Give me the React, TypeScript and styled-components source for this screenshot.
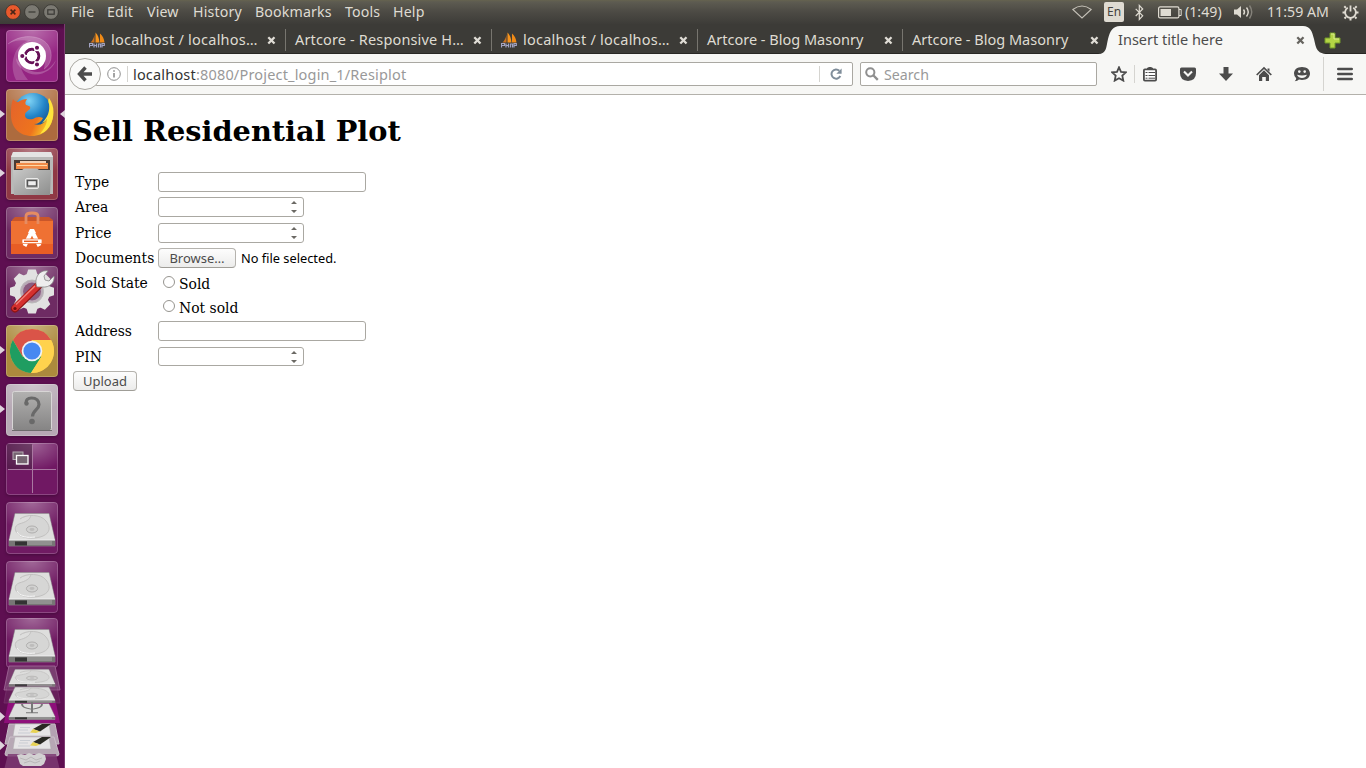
import React from "react";
import styled, { createGlobalStyle } from "styled-components";

const UI = `"Noto Sans", "Open Sans", sans-serif`;
const SERIF = `"DejaVu Serif", serif`;

const Global = createGlobalStyle`
  *, *::before, *::after { box-sizing: border-box; }
  body { margin: 0; background: #fff; overflow: hidden; }
  svg { display: block; flex: none; }
`;

const Desktop = styled.div`
  width: 1366px;
  height: 768px;
  display: flex;
  flex-direction: column;
  overflow: hidden;
  font-family: ${UI};
`;

/* ---------- top panel ---------- */
const Panel = styled.header`
  height: 24px;
  flex: none;
  display: flex;
  align-items: center;
  padding: 0 7px 0 5px;
  background: linear-gradient(#66634f 0, #5d5b51 2px, #4c4a44 12px, #3d3c38 24px);
  color: #dfdbd2;
`;
const WindowButtons = styled.div`
  display: flex;
  gap: 3px;
  margin-right: 12px;
`;
const Text = styled.span<{ $w?: number; $ls?: number; $size?: number; $gap?: number; $drop?: number }>`
  display: block;
  flex: none;
  white-space: nowrap;
  width: ${(p) => (p.$w ? `${p.$w}px` : "auto")};
  margin-right: ${(p) => p.$gap ?? 0}px;
  padding-top: ${(p) => p.$drop ?? 0}px;
  font-size: ${(p) => p.$size ?? 14}px;
  letter-spacing: ${(p) => p.$ls ?? 0}px;
  line-height: 20px;
`;
const TabText = styled(Text)`
  padding-bottom: 2px;
`;
const Indicators = styled.div`
  display: flex;
  align-items: center;
  margin-left: auto;
  height: 24px;
`;
const Lang = styled.span`
  width: 20px;
  height: 20px;
  margin: 0 11px 0 12px;
  border-radius: 2px;
  background: #dfdbd2;
  color: #45433e;
  font-size: 12px;
  line-height: 20px;
  text-align: center;
`;

/* ---------- launcher ---------- */
const Body = styled.div`
  display: flex;
  flex: 1;
  min-height: 0;
`;
const Launcher = styled.nav`
  width: 65px;
  flex: none;
  display: flex;
  flex-direction: column;
  gap: 7px;
  padding: 6px 0 0 6px;
  background: linear-gradient(90deg, transparent 64px, #7c3a71 64px),
    linear-gradient(#3b0a33 0, #5e0f51 6px, #5e0f51 100%);
`;
const Tile = styled.div<{ $bg: string; $short?: boolean }>`
  position: relative;
  width: 52px;
  height: ${(p) => (p.$short ? 50 : 52)}px;
  margin-top: ${(p) => (p.$short ? -2 : 0)}px;
  flex: none;
  border-radius: 4px;
  background: ${(p) => p.$bg};
  box-shadow: inset 0 0 0 1px rgba(255, 255, 255, 0.2), 0 1px 3px rgba(0, 0, 0, 0.25);
`;
const Pip = styled.i<{ $right?: boolean }>`
  position: absolute;
  top: 21px;
  ${(p) => (p.$right ? "right: -7px" : "left: -6px")};
  border: 5px solid transparent;
  border-width: 4.5px 5px;
  ${(p) => (p.$right ? "border-right-color: #ded3dc; border-left-width: 0" : "border-left-color: #ded3dc; border-right-width: 0")};
`;
const StackArea = styled.div`
  position: relative;
  margin: -13px 0 0 -6px;
`;

/* ---------- browser ---------- */
const Browser = styled.main`
  flex: 1;
  min-width: 0;
  display: flex;
  flex-direction: column;
  background: #fff;
`;
const TabStrip = styled.div`
  height: 30px;
  flex: none;
  display: flex;
  padding-left: 14px;
  background: #3c3b37;
  border-bottom: 1px solid #282724;
`;
const Tab = styled.div<{ $w: number; $last?: boolean }>`
  width: ${(p) => p.$w}px;
  flex: none;
  display: flex;
  align-items: center;
  padding: 3px 10px 0 9px;
  color: #dfdbd2;
  background: ${(p) =>
    p.$last ? "none" : "linear-gradient(#77756f, #77756f) right 5px / 1px 22px no-repeat"};
  &:first-child { padding-left: 10px; }
`;
const CloseSlot = styled.span`
  margin-left: auto;
`;
const ActiveTab = styled.div`
  position: relative;
  width: 230px;
  height: 30px;
  margin-left: -11px;
  flex: none;
  display: flex;
  align-items: center;
  padding: 3px 23px 1px 20px;
  color: #4c4c4c;
`;
const TabShape = styled.svg`
  position: absolute;
  left: 0;
  top: 0;
`;
const ActiveContent = styled.div`
  position: relative;
  flex: 1;
  display: flex;
  align-items: center;
`;
const NewTab = styled.div`
  padding-top: 8px;
  margin-left: -4px;
`;
const Toolbar = styled.div`
  height: 41px;
  flex: none;
  display: flex;
  align-items: center;
  padding: 0 13px 0 4px;
  background: #f7f7f5;
  border-bottom: 1px solid #b3b1ab;
`;
const Back = styled.div`
  position: relative;
  z-index: 1;
  width: 32px;
  height: 32px;
  flex: none;
  display: grid;
  place-items: center;
  border: 1px solid #aaa8a2;
  border-radius: 50%;
  background: #fafaf9;
`;
const Field = styled.div<{ $w: number; $url?: boolean }>`
  width: ${(p) => p.$w}px;
  height: 24px;
  flex: none;
  display: flex;
  align-items: center;
  margin-left: ${(p) => (p.$url ? -6 : 7)}px;
  padding: ${(p) => (p.$url ? "0 10px 0 11px" : "0 4px")};
  background: #fff;
  border: 1px solid #aaa8a2;
  border-radius: 2px;
  color: #999;
  b { font-weight: 400; color: #333; }
`;
const Divider = styled.i<{ $h: number; $m: string }>`
  width: 1px;
  height: ${(p) => p.$h}px;
  margin: ${(p) => p.$m};
  background: #d5d4d0;
  flex: none;
`;
const Tools = styled.div`
  display: flex;
  align-items: center;
  margin-left: auto;
`;
const ToolIcons = styled.div`
  display: flex;
  gap: 22px;
`;

/* ---------- page ---------- */
const Page = styled.section`
  padding: 18px 0 0 8px;
  font-family: ${SERIF};
  color: #000;
`;
const Title = styled.h1`
  margin: 0 0 21px -1px;
  height: 36px;
  font-size: 28.8px;
  line-height: 36px;
  font-weight: 700;
  white-space: nowrap;
`;
const Row = styled.div<{ $h: number }>`
  height: ${(p) => p.$h}px;
  display: flex;
  align-items: center;
  padding-left: 2px;
`;
const Label = styled.label`
  width: 83px;
  flex: none;
  font-size: 13.9px;
  line-height: 20px;
  white-space: nowrap;
`;
const Box = styled.div<{ $w: number; $h?: number }>`
  width: ${(p) => p.$w}px;
  height: ${(p) => p.$h ?? 20}px;
  display: flex;
  align-items: center;
  border: 1px solid #aaa8a2;
  border-radius: 3px;
  background: #fff;
  padding-right: 5px;
`;
const Input = styled.input`
  flex: 1;
  min-width: 0;
  height: 16px;
  padding: 0 4px;
  border: 0;
  outline: 0;
  background: none;
  font: 13px ${UI};
`;
const Button = styled.button<{ $w: number }>`
  display: block;
  width: ${(p) => p.$w}px;
  height: 20px;
  padding: 0;
  border: 1px solid #b5b3ae;
  border-bottom-color: #9f9d97;
  border-radius: 4px;
  background: linear-gradient(#fdfdfd, #ececeb);
  color: #4c4c4c;
  font: 13px/17px ${UI};
`;
const SubmitButton = styled(Button)`
  margin-top: 2px;
`;
const FileNote = styled.span`
  margin-left: 5px;
  font: 12.8px/18px ${UI};
`;
const Radio = styled.input.attrs({ type: "radio" })`
  appearance: none;
  width: 12px;
  height: 12px;
  margin: -2px 4px 0 5px;
  border: 1px solid #96948f;
  border-radius: 50%;
  background: #fff;
`;
const RadioText = styled.label`
  font-size: 13.9px;
  line-height: 20px;
  padding-top: 2px;
`;

/* ---------- small icons ---------- */
const WinBtn = ({ kind }: { kind: "close" | "min" | "max" }) => (
  <svg width="16" height="16" viewBox="0 0 16 16">
    <circle cx="8" cy="8" r="7.4" fill={kind === "close" ? "#e9592c" : "#7b7972"} stroke="#35332f" strokeWidth=".8" />
    {kind === "close" && <path d="M5.6 5.6l4.8 4.8M10.4 5.6l-4.8 4.8" stroke="#4b2517" strokeWidth="1.5" />}
    {kind === "min" && <path d="M4.5 8h7" stroke="#3a3935" strokeWidth="1.2" />}
    {kind === "max" && <rect x="4.8" y="5.8" width="6.4" height="4.4" fill="none" stroke="#3a3935" strokeWidth="1.2" />}
  </svg>
);
const Close = ({ color = "#e0ddd6" }: { color?: string }) => (
  <svg width="9" height="9" viewBox="0 0 9 9">
    <path d="M1.3 1.3l6.2 6.2M7.5 1.3L1.3 7.5" stroke={color} strokeWidth="2.3" />
  </svg>
);
const Favicon = () => (
  <svg width="16" height="16" viewBox="0 0 16 16">
    <path d="M5.500 2.500C5 6 3.500 8.500 1.500 10.500h4z" fill="#c9711d" />
    <path d="M6.500 .5v10h4C10 6 9 3 6.500 .5z" fill="#f7941d" />
    <path d="M11 1.500v9h4.500c-.5-4-2-7-4.500-9z" fill="#f08a16" />
    <path d="M.5 11v4.500M.5 11.500h3v2h-3M5 15.500V11.500M5 13.500h2.500M7.500 11.500v4M9.500 15.500V12h2v3.500M13 15.500v-4h2.300v2H13" fill="none" stroke="#a3a4c2" strokeWidth="1.200" />
  </svg>
);

/* ---------- launcher art ---------- */
const Art = ({ children }: { children: React.ReactNode }) => (
  <svg width="52" height="52" viewBox="0 0 52 52">{children}</svg>
);
const UbuntuLogo = () => (
  <Art>
    <path d="M2 14C14 4 34 4 42 15c6 9 3 20-4 24 3-14-2-24-12-27C17 9 9 10 2 14z" fill="#fff" opacity=".2" />
    <path d="M10 50C2 33 9 13 25 10c-9 6-13 15-11 24 1 6 4 11 8 16z" fill="#fff" opacity=".18" />
    <path d="M50 30c-4 13-22 20-34 9-4-3-6-7-6-11 7 12 18 16 28 13 5-2 9-6 12-11z" fill="#fff" opacity=".22" />
    <path d="M2 14C14 4 34 4 42 15c6 9 3 20-4 24" fill="none" stroke="#f3d9ef" strokeWidth=".8" opacity=".3" />
    <circle cx="26" cy="26" r="14" fill="#fff" />
    <circle cx="26" cy="26" r="6.800" fill="none" stroke="#661057" strokeWidth="3" />
    <g stroke="#fff" strokeWidth="1.300">
      <path d="M26 26l-11-.5M26 26l5.500-9.500M26 26l5.500 9.500" />
      <circle cx="16.300" cy="26" r="2.700" fill="#661057" />
      <circle cx="31" cy="17.800" r="2.700" fill="#661057" />
      <circle cx="31" cy="34.500" r="2.700" fill="#661057" />
    </g>
    <circle cx="26" cy="26" r="5.300" fill="#fff" />
  </Art>
);
const Firefox = () => (
  <Art>
    <defs>
      <radialGradient id="ffb" cx=".4" cy=".2" r=".8">
        <stop offset="0" stopColor="#7fd3f5" /><stop offset=".5" stopColor="#2385c8" /><stop offset="1" stopColor="#123f7c" />
      </radialGradient>
      <linearGradient id="ffo" x1="0" x2="1" y1=".2" y2=".6">
        <stop offset="0" stopColor="#e5652a" /><stop offset=".65" stopColor="#ee741d" /><stop offset="1" stopColor="#fbd82b" />
      </linearGradient>
    </defs>
    <circle cx="27" cy="23.500" r="19.500" fill="url(#ffb)" />
    <path d="M7 10c1 2 3 3 5 3 3-2 6-3 9-3-2 3-2 4-1 6 3 1 5 1 4 4-2 2-5 3-5 6 0 4 4 5 8 4 3-2 6-3 10-1-2 4-5 6-9 6 5 2 10 0 13-5 3-4 3-8 3-12 2-1 3 3 3 7C47 38 38 47 26 47 13 47 5 38 5 26c0-6 0-11 2-16z" fill="url(#ffo)" />
    <path d="M43 9c6 8 6 20 0 29-3 4-6 6-9 7 5-6 7-11 7-15-1 2-3 3-5 4 6-6 8-12 7-19-1-2-1-4 0-6z" fill="#ffe43c" />
  </Art>
);
const Files = () => (
  <Art>
    <defs><linearGradient id="fil" x1="0" x2="1" y2="1"><stop stopColor="#c9c9c8" /><stop offset="1" stopColor="#8d8e8d" /></linearGradient></defs>
    <path d="M7 4h38l2 5v37H5V9z" fill="#b9b9b7" />
    <path d="M7 4h38l2 5H5z" fill="#e4e4e3" />
    <rect x="8" y="12" width="36" height="10" fill="#4b3c34" />
    <rect x="14" y="13" width="26" height="4" fill="#f3d3b8" />
    <path d="M10 15h32v6H10z" fill="#f08a48" /><path d="M11 17.500h30" stroke="#ffd9a6" />
    <path d="M7 22h9l2-1.500h13l2 1.500h12l-1 25H8z" fill="url(#fil)" />
    <rect x="19.500" y="30.500" width="13" height="10" rx="1.500" fill="#bcbcba" stroke="#ebebea" />
    <rect x="21.500" y="32.500" width="9" height="5.500" fill="#eee" stroke="#555" strokeWidth="1.400" />
  </Art>
);
const Software = () => (
  <Art>
    <path d="M6 13l3-3h34l4 3v5H5z" fill="#c9562a" />
    <path d="M5 14h42v33H5z" fill="#ef7133" /><path d="M5 37h42v10H5z" fill="#e85d25" />
    <path d="M20 17V9c0-4 12-4 12 0v8" fill="none" stroke="#e58c62" strokeWidth="2.800" />
    <path d="M26 24L18.500 39M26 24L33.500 39" fill="none" stroke="#fff" strokeWidth="4" />
    <path d="M24 22h4l2 4h-8z" fill="#fff" />
    <rect x="16" y="32" width="20" height="4.500" rx="1" fill="#fff" stroke="#ef7133" strokeWidth=".7" />
    <path d="M18 34.300h14" stroke="#e75c20" strokeWidth="1.500" />
  </Art>
);
const Settings = () => (
  <Art>
    <g transform="translate(26 25.500)" fill="#e2e2e1">
      {[0, 45, 90, 135, 180, 225, 270, 315].map((a) => (
        <path key={a} transform={`rotate(${a})`} d="M-3.800-22h7.600l2 6H-5.800z" />
      ))}
      <circle r="14.500" fill="none" stroke="#e2e2e1" strokeWidth="7" />
      <circle r="11.500" fill="#b9a9b6" stroke="#bbb" strokeWidth="1" />
      <circle r="9" fill="#8a5c80" />
    </g>
    <path d="M9 42.500L32 20" stroke="#8e1414" strokeWidth="8" strokeLinecap="round" />
    <path d="M9 42L32 19.500" stroke="#d5302e" strokeWidth="6.200" strokeLinecap="round" />
    <path d="M10 38.500L29 20" stroke="#f0837b" strokeWidth="1.300" />
    <path d="M31 21c-2-5-1-9 1-12 2-3 6-5 10-4l-4 5 1 4 4 1 5-5c1 6-4 12-12 11z" fill="#eee" stroke="#868686" strokeWidth=".8" />
    <circle cx="9" cy="42.500" r="1.600" fill="#6d1010" />
  </Art>
);
const Chrome = () => (
  <Art>
    <circle cx="26" cy="26" r="22" fill="#ffd24d" />
    <path d="M26 15h19.100A22 22 0 0 0 6.900 15l9.600 16.500z" fill="#da5448" />
    <path d="M6.900 15A22 22 0 0 0 25 48l10.500-16.500H16.500z" fill="#1f9d61" />
    <path d="M26 15h19.100A22 22 0 0 1 25 48l10.500-16.500z" fill="#ffd24d" />
    <circle cx="26" cy="26" r="10.300" fill="#f2f3f4" /><circle cx="26" cy="26" r="8.600" fill="#4788f1" />
  </Art>
);
const Unknown = () => (
  <Art>
    <defs><linearGradient id="unk" x2="0" y2="1"><stop stopColor="#b2b1b0" /><stop offset="1" stopColor="#858484" /></linearGradient></defs>
    <rect x="6.500" y="7.500" width="39" height="39" rx="2" fill="url(#unk)" stroke="#d8d6d6" />
    <path d="M6 46.500h40" stroke="#6d6b6c" />
    <path d="M20 19c0-3 2-5 5.500-5C30.500 14 33 17 33 20.500c0 5-6.500 6-6.500 12" fill="none" stroke="#696969" strokeWidth="3.200" />
    <circle cx="20.500" cy="19.500" r="2.200" fill="#696969" /><circle cx="26" cy="37.500" r="2.800" fill="#696969" />
  </Art>
);
const Workspaces = () => (
  <Art>
    <path d="M1 1h25v25H1z" fill="#462040" opacity=".55" />
    <path d="M26.500 2v48M2 26.500h48" stroke="#a978a1" />
    <rect x="7" y="9" width="10" height="7.500" fill="#756471" stroke="#b4a9b2" />
    <rect x="10.500" y="12.500" width="11.500" height="8.500" fill="#756471" stroke="#fff" strokeWidth="1.300" />
  </Art>
);
const DriveShape = ({ usb }: { usb?: boolean }) => (
  <g>
    <path d="M9 11.500h34L49 38v6H3v-6z" fill="#d5d5d4" stroke="#949393" strokeWidth=".6" />
    <path d="M9.500 12h33L48.500 37.500H3.500z" fill="#dededd" />
    {usb ? (
      <path d="M26 30V8M16 12c0 7 3 8 10 11M36 12c0 7-3 8-10 11M20 30h12" fill="none" stroke="#777" strokeWidth="2" />
    ) : (
      <>
        <path d="M14 17c6-5 21-5 26 2 5 6 4 12-3 15-7 3-18 3-24-1-5-4-5-9 0-11 7-2 11-4 12-9" fill="#d6d6d5" stroke="#c2c1c0" strokeWidth="1" />
        <path d="M11 30c2 5 11 6 18 5" fill="none" stroke="#f6f6f6" />
        <ellipse cx="26" cy="27.500" rx="5.600" ry="3.500" fill="#d2d2d1" stroke="#b0afae" />
        <ellipse cx="26" cy="27.500" rx="2.500" ry="1.400" fill="#bdbcbb" />
      </>
    )}
    <path d="M3 38h46v6H3z" fill="#777675" /><path d="M3 38h46" stroke="#f5f5f5" />
    <path d="M9 39.500h12v4H9z" fill="#333" /><path d="M21 39h25v4H21z" fill="#a2a1a0" opacity=".6" />
  </g>
);
const Drive = () => <Art><DriveShape /></Art>;

const Paper = () => (
  <g>
    <path d="M15 0h34l2 12H13z" fill="#e6e4e6" stroke="#aaa" strokeWidth=".5" />
    <path d="M20 3.500h10M19 6h9M18 9h12" stroke="#c9ccd3" />
    <path d="M33 5l9-5h9L40 7.500z" fill="#292823" />
    <path d="M33 5l7 2.500-4 1.500-6-.5z" fill="#e8d253" />
  </g>
);
const Stack = () => (
  <svg width="64" height="108" viewBox="0 0 64 108">
    {/* folded launcher entries, the lower ones drawn over the upper */}
    <path d="M9 4h46l5 24H4z" fill="#793d70" stroke="#a36b9b" strokeWidth=".8" />
    <g transform="translate(6 1.500) scale(1 .53)"><DriveShape /></g>
    <path d="M7 24h50l3 17H4z" fill="#793d70" opacity=".35" stroke="#a36b9b" strokeWidth=".8" />
    <g transform="translate(6 19.500) scale(1 .49)"><DriveShape /></g>
    <path d="M8 41h48l4 20H4z" fill="#8e0f7a" />
    <g transform="translate(6 36) scale(1 .49)"><DriveShape usb /></g>
    <path d="M9 62h46l4 20H5z" fill="#b4a2b2" stroke="#c8bac6" />
    <g transform="translate(0 62)"><Paper /></g>
    <path d="M10 75h44l5 17q0 2-3 2H8q-3 0-3-2z" fill="#b7a8b5" stroke="#cbbec9" />
    <g transform="translate(0 75)"><Paper /></g>
    <path d="M8 92h48l4 16H4z" fill="#7d3a72" opacity=".85" />
    <path d="M17 93l4-1 4 1 4-2 5 2 5-2 6 2 1 4-2 5-3 2H23l-3-2z" fill="#d3d1d2" />
    <path d="M20 96l6 2 5-3 5 3 6-2M24 101l6-2 5 2 5-2" fill="none" stroke="#b9b7b8" />
    <path d="M0 50l5 4.500L0 59zM0 79l5 4.500L0 88z" fill="#ded3dc" />
  </svg>
);

const glass = (c: string) => `radial-gradient(ellipse 75% 55% at 50% 0, rgba(255,255,255,.34), rgba(255,255,255,0) 100%), ${c}`;
const launcherItems: { id: string; bg: string; art: React.ReactNode; run?: boolean; focus?: boolean; short?: boolean }[] = [
  { id: "dash", bg: glass("#952482"), art: <UbuntuLogo /> },
  { id: "firefox", bg: glass("#ad6b3e"), art: <Firefox />, run: true, focus: true },
  { id: "files", bg: glass("#8f3844"), art: <Files />, run: true },
  { id: "software", bg: glass("#6e2b63"), art: <Software /> },
  { id: "settings", bg: glass("#6e2b63"), art: <Settings /> },
  { id: "chrome", bg: glass("#ac8a3d"), art: <Chrome />, run: true },
  { id: "unknown", bg: glass("#b7a9b5"), art: <Unknown />, run: true },
  { id: "spaces", bg: glass("#701863"), art: <Workspaces /> },
  { id: "disk1", bg: glass("#701b63"), art: <Drive /> },
  { id: "disk2", bg: glass("#701b63"), art: <Drive /> },
  { id: "disk3", bg: glass("#701b63"), art: <Drive />, short: true },
];

const menu: [string, number][] = [
  ["File", 24], ["Edit", 28], ["View", 34], ["History", 50], ["Bookmarks", 78], ["Tools", 36], ["Help", 32],
];
const tabs: { label: string; w: number; tw: number; ls: number; icon?: boolean; last?: boolean }[] = [
  { label: "localhost / localhos…", w: 207, tw: 147, ls: 0.24, icon: true },
  { label: "Artcore - Responsive H…", w: 206, tw: 169, ls: 0.15 },
  { label: "localhost / localhos…", w: 206, tw: 147, ls: 0.24, icon: true },
  { label: "Artcore - Blog Masonry", w: 205, tw: 157, ls: 0 },
  { label: "Artcore - Blog Masonry", w: 206, tw: 157, ls: 0, last: true },
];

const Spinner = () => (
  <svg width="8" height="14" viewBox="0 0 8 14"><path d="M1 4l3-3 3 3zM1 10l3 3 3-3z" fill="#6b6964" /></svg>
);
const NumberRow = ({ label, h, bh }: { label: string; h: number; bh?: number }) => (
  <Row $h={h}><Label>{label}</Label><Box $w={146} $h={bh}><Input /><Spinner /></Box></Row>
);
const TextRow = ({ label, h }: { label: string; h: number }) => (
  <Row $h={h}><Label>{label}</Label><Box $w={208}><Input /></Box></Row>
);

const dark = "#4c4c4c";

export default function App() {
  return (
    <Desktop>
      <Global />
      <Panel>
        <WindowButtons><WinBtn kind="close" /><WinBtn kind="min" /><WinBtn kind="max" /></WindowButtons>
        {menu.map(([t, w]) => <Text key={t} $w={w} $size={14.2} $ls={0.15} $gap={12}>{t}</Text>)}
        <Indicators>
          <svg width="20" height="14" viewBox="0 0 20 14"><path d="M.8 4.500Q10-2.500 19.200 4.500L10 13z" fill="none" stroke="#c5c1b8" strokeWidth="1.100" /></svg>
          <Lang>En</Lang>
          <svg width="9" height="17" viewBox="0 0 9 17"><path d="M.7 4.800l7 7-3.400 3.600V1.400L7.700 5l-7 7" fill="none" stroke="#dfdbd2" strokeWidth="1.200" /></svg>
          <svg width="41" height="13" viewBox="0 0 41 13"><g transform="translate(14)"><rect x=".6" y=".9" width="20.300" height="11" rx="1.500" fill="none" stroke="#dfdbd2" strokeWidth="1.200" /><path d="M2.500 3h10.500v7H2.500z" fill="#dfdbd2" /><path d="M21 3.500h2.200v6H21" fill="none" stroke="#dfdbd2" /></g></svg>
          <Text $w={37} $size={14.2} $gap={12}>(1:49)</Text>
          <svg width="20" height="16" viewBox="0 0 20 16"><path d="M0 5.500h3L7 2v12l-4-3.500H0z" fill="#dfdbd2" /><path d="M9.500 5.500q2 2.500 0 5" fill="none" stroke="#dfdbd2" strokeWidth="1.400" /><path d="M12.500 3.500q3.500 4.500 0 9" fill="none" stroke="#dfdbd2" strokeWidth="1.400" /><path d="M15.500 1.500q4.500 6.500 0 13" fill="none" stroke="#85827a" strokeWidth="1.400" /></svg>
          <Divider $h={0} $m="0 12px 0 0" />
          <Text $w={62} $size={14.2} $gap={13}>11:59 AM</Text>
          <svg width="17" height="17" viewBox="0 0 17 17"><g fill="none" stroke="#dfdbd2"><path d="M5.800 3.700a5.400 5.400 0 1 0 5.400 0M8.500 1.500v6" strokeWidth="1.800" /><path d="M3.900 3.900L2.300 2.300M13.100 3.900l1.600-1.600M3 8.500H.5M14 8.500h2.500M4 13l-1.500 1.500M13 13l1.500 1.500M8.500 14v2.500" strokeWidth="2" /></g></svg>
        </Indicators>
      </Panel>

      <Body>
        <Launcher>
          {launcherItems.map((i) => (
            <Tile key={i.id} $bg={i.bg} $short={i.short}>
              {i.art}{i.run && <Pip />}{i.focus && <Pip $right />}
            </Tile>
          ))}
          <StackArea><Stack /></StackArea>
        </Launcher>

        <Browser>
          <TabStrip>
            {tabs.map((t, n) => (
              <Tab key={n} $w={t.w} $last={t.last}>
                {t.icon && <Text as="div" $gap={6}><Favicon /></Text>}
                <TabText $w={t.tw} $size={14.5} $ls={t.ls}>{t.label}</TabText>
                <CloseSlot><Close /></CloseSlot>
              </Tab>
            ))}
            <ActiveTab>
              <TabShape width="230" height="30"><path d="M0 30c9 0 8-7 10-15s5-13 12-13h183c7 0 9 5 11 13s2 15 14 15z" fill="#f7f7f5" /></TabShape>
              <ActiveContent>
                <TabText $size={14.5}>Insert title here</TabText>
                <CloseSlot><Close color="#66645f" /></CloseSlot>
              </ActiveContent>
            </ActiveTab>
            <NewTab><svg width="17" height="17" viewBox="0 0 17 17"><path d="M6 1h5v5h5v5h-5v5H6v-5H1V6h5z" fill="#b4d445" stroke="#73992b" /><path d="M7 2h3v5h5" fill="none" stroke="#dcec91" /></svg></NewTab>
          </TabStrip>

          <Toolbar>
            <Back><svg width="16" height="16" viewBox="0 0 16 16"><path d="M8.500 1.500L2.500 8l6 6.500M3 8h12" fill="none" stroke={dark} strokeWidth="3.400" /></svg></Back>
            <Field $w={758} $url>
              <svg width="14" height="14" viewBox="0 0 14 14"><circle cx="7" cy="7" r="6.300" fill="none" stroke="#8f8f8f" /><path d="M7 6v4.500M7 3.200v1.600" stroke="#858585" strokeWidth="1.500" /></svg>
              <Divider $h={16} $m="0 5px 0 6px" />
              <Text $size={14.5} $ls={0.18}><b>localhost</b>:8080/Project_login_1/Resiplot</Text>
              <Divider $h={16} $m="0 10px 0 auto" />
              <svg width="12" height="12" viewBox="0 0 12 12"><path d="M9.300 2.700A4.600 4.600 0 1 0 10.300 8" fill="none" stroke="#7f8d9a" strokeWidth="2" /><path d="M11.600.5v5.200H6.300z" fill="#7f8d9a" /></svg>
            </Field>
            <Field $w={237}>
              <svg width="14" height="14" viewBox="0 0 14 14"><circle cx="5.300" cy="5.300" r="4.100" fill="none" stroke="#8f8f8f" strokeWidth="2" /><path d="M8.500 8.500l4.300 4.300" stroke="#8f8f8f" strokeWidth="2.400" /></svg>
              <Divider $h={0} $m="0 4px 0 0" />
              <Text $size={14.2} $drop={1}>Search</Text>
            </Field>
            <Tools>
              <svg width="16" height="16" viewBox="0 0 16 16"><path d="M8 1.300l2 4.500 5 .5-3.700 3.300 1 5L8 12.200l-4.300 2.400 1-5L1 6.300l5-.5z" fill="none" stroke={dark} strokeWidth="1.800" /></svg>
              <Divider $h={18} $m="0 7px" />
              <ToolIcons>
                <svg width="16" height="16" viewBox="0 0 16 16"><path d="M5 3.300V2l2-1h2l2 1v1.300" fill={dark} /><rect x="1.900" y="3.400" width="12.200" height="11.200" rx="1" fill="#fff" stroke={dark} strokeWidth="1.800" /><path d="M3.500 6.500h2M6.500 6.500H13M3.500 9.500h2M6.500 9.500H13M3.500 12.200h2M6.500 12.200H13" stroke={dark} strokeWidth="1" /></svg>
                <svg width="16" height="16" viewBox="0 0 16 16"><path d="M1.500 1.500h13q1.500 0 1.500 1.500v4q0 7.500-8 8-8-.5-8-8V3q0-1.500 1.500-1.500z" fill={dark} /><path d="M4 5.500l4 4 4-4" fill="none" stroke="#f7f7f5" strokeWidth="2.100" /></svg>
                <svg width="16" height="16" viewBox="0 0 16 16"><path d="M5.500 1h5v6.500H15L8 15 1 7.500h4.500z" fill={dark} /></svg>
                <svg width="16" height="16" viewBox="0 0 16 16"><path d="M.7 9L8 2l7.300 7" fill="none" stroke={dark} strokeWidth="1.700" /><path d="M11.500 2.500h2v3.300l-2-2zM3 9.200l5-5 5 5V15H9.800v-4H6.200v4H3z" fill={dark} /></svg>
                <svg width="16" height="16" viewBox="0 0 16 16"><path d="M8 1c5 0 8 2.800 8 6.500S13 14 8 14q-1.500 0-3-.4Q3.500 15.300.7 15.300q1.600-1.300 1.500-3Q0 10.500 0 7.500C0 3.800 3 1 8 1z" fill={dark} /><circle cx="5.300" cy="5.600" r="1.300" fill="#f7f7f5" /><circle cx="10.700" cy="5.600" r="1.300" fill="#f7f7f5" /><path d="M3 8.800q5 1.500 10 0-1.500 3.200-5 3.200T3 8.800z" fill="#f7f7f5" /></svg>
              </ToolIcons>
              <Divider $h={34} $m="0 13px" />
              <svg width="16" height="16" viewBox="0 0 16 16"><path d="M1.300 3h13.400M1.300 8h13.400M1.300 13h13.400" stroke={dark} strokeWidth="2.600" strokeLinecap="round" /></svg>
            </Tools>
          </Toolbar>

          <Page>
            <Title>Sell Residential Plot</Title>
            <TextRow label="Type" h={24} />
            <NumberRow label="Area" h={26} />
            <NumberRow label="Price" h={26} />
            <Row $h={24}><Label>Documents</Label><Button $w={78}>Browse…</Button><FileNote>No file selected.</FileNote></Row>
            <Row $h={26}><Label>Sold State</Label><Radio name="sold" /><RadioText>Sold</RadioText></Row>
            <Row $h={22}><Label /><Radio name="sold" /><RadioText>Not sold</RadioText></Row>
            <TextRow label="Address" h={26} />
            <NumberRow label="PIN" h={25} bh={19} />
            <SubmitButton $w={64}>Upload</SubmitButton>
          </Page>
        </Browser>
      </Body>
    </Desktop>
  );
}
